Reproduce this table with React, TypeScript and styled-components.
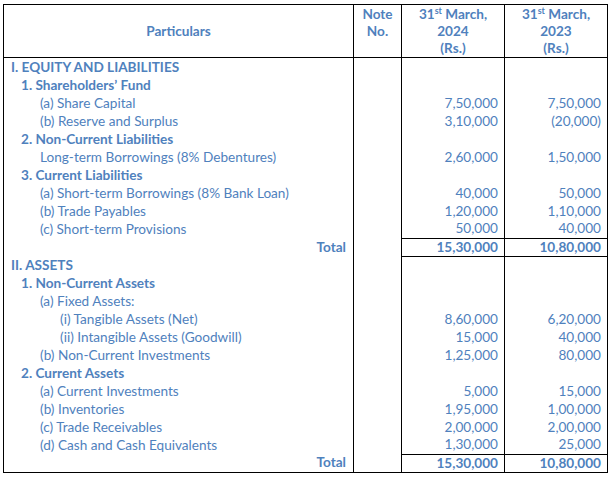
import React from "react";
import styled, { createGlobalStyle } from "styled-components";

const GlobalStyle = createGlobalStyle`
  html, body { margin: 0; padding: 0; background: #ffffff; }
  body { font-family: Lato, "Open Sans", sans-serif; }
`;

const Page = styled.div`
  padding: 4px 0 0 3px;
`;

const Table = styled.table`
  border-collapse: collapse;
  table-layout: fixed;
  width: 605px;
  border: 1px solid #000;
  color: #4f81bd;
  font-family: Lato, "Open Sans", sans-serif;
  font-size: 13.6px;
  line-height: 17px;
`;

const HeadCell = styled.th<{ $valign?: string }>`
  border: 1px solid #000;
  height: 48px;
  padding: 1px 2px 0;
  font-weight: 700;
  text-align: center;
  vertical-align: ${(p) => p.$valign || "top"};
`;

const Row = styled.tr`
  height: 18px;
`;

const LabelCell = styled.td<{ $indent: number; $bold?: boolean }>`
  padding: 0 0 0 ${(p) => p.$indent}px;
  border-left: 1px solid #000;
  border-right: 1px solid #000;
  font-weight: ${(p) => (p.$bold ? 700 : 400)};
  white-space: nowrap;
  height: 18px;
`;

const TotalLabel = styled.td`
  padding: 0 7px 0 0;
  text-align: right;
  font-weight: 700;
  border-left: 1px solid #000;
  border-right: 1px solid #000;
`;

const NoteCell = styled.td`
  border-left: 1px solid #000;
  border-right: 1px solid #000;
`;

const AmountCell = styled.td<{ $total?: boolean }>`
  padding: 0 6px 0 0;
  text-align: right;
  white-space: nowrap;
  border-left: 1px solid #000;
  border-right: 1px solid #000;
  font-weight: ${(p) => (p.$total ? 700 : 400)};
  ${(p) => (p.$total ? "border-top: 1px solid #000; border-bottom: 1px solid #000;" : "")}
`;

type Line = {
  text: string;
  level: number;
  bold?: boolean;
  a?: string;
  b?: string;
  total?: boolean;
};

const indents = [7, 17, 36, 56];

const lines: Line[] = [
  { text: "I. EQUITY AND LIABILITIES", level: 0, bold: true },
  { text: "1. Shareholders’ Fund", level: 1, bold: true },
  { text: "(a) Share Capital", level: 2, a: "7,50,000", b: "7,50,000" },
  { text: "(b) Reserve and Surplus", level: 2, a: "3,10,000", b: "(20,000)" },
  { text: "2. Non-Current Liabilities", level: 1, bold: true },
  { text: "Long-term Borrowings (8% Debentures)", level: 2, a: "2,60,000", b: "1,50,000" },
  { text: "3. Current Liabilities", level: 1, bold: true },
  { text: "(a) Short-term Borrowings (8% Bank Loan)", level: 2, a: "40,000", b: "50,000" },
  { text: "(b) Trade Payables", level: 2, a: "1,20,000", b: "1,10,000" },
  { text: "(c) Short-term Provisions", level: 2, a: "50,000", b: "40,000" },
  { text: "Total", level: 0, total: true, a: "15,30,000", b: "10,80,000" },
  { text: "II. ASSETS", level: 0, bold: true },
  { text: "1. Non-Current Assets", level: 1, bold: true },
  { text: "(a) Fixed Assets:", level: 2 },
  { text: "(i) Tangible Assets (Net)", level: 3, a: "8,60,000", b: "6,20,000" },
  { text: "(ii) Intangible Assets (Goodwill)", level: 3, a: "15,000", b: "40,000" },
  { text: "(b) Non-Current Investments", level: 2, a: "1,25,000", b: "80,000" },
  { text: "2. Current Assets", level: 1, bold: true },
  { text: "(a) Current Investments", level: 2, a: "5,000", b: "15,000" },
  { text: "(b) Inventories", level: 2, a: "1,95,000", b: "1,00,000" },
  { text: "(c) Trade Receivables", level: 2, a: "2,00,000", b: "2,00,000" },
  { text: "(d) Cash and Cash Equivalents", level: 2, a: "1,30,000", b: "25,000" },
  { text: "Total", level: 0, total: true, a: "15,30,000", b: "10,80,000" },
];

const Sup = styled.sup`
  font-size: 9px;
  line-height: 0;
  vertical-align: 5px;
`;

export default function App() {
  return (
    <>
      <GlobalStyle />
      <Page>
        <Table>
          <colgroup>
            <col style={{ width: 350 }} />
            <col style={{ width: 48 }} />
            <col style={{ width: 103 }} />
            <col style={{ width: 103 }} />
          </colgroup>
          <thead>
            <tr>
              <HeadCell $valign="middle">Particulars</HeadCell>
              <HeadCell>
                Note
                <br />
                No.
              </HeadCell>
              <HeadCell>
                31<Sup>st</Sup> March,
                <br />
                2024
                <br />
                (Rs.)
              </HeadCell>
              <HeadCell>
                31<Sup>st</Sup> March,
                <br />
                2023
                <br />
                (Rs.)
              </HeadCell>
            </tr>
          </thead>
          <tbody>
            {lines.map((l, i) => (
              <Row key={i}>
                {l.total ? (
                  <TotalLabel>{l.text}</TotalLabel>
                ) : (
                  <LabelCell $indent={indents[l.level]} $bold={l.bold}>
                    {l.text}
                  </LabelCell>
                )}
                <NoteCell />
                <AmountCell $total={l.total}>{l.a}</AmountCell>
                <AmountCell $total={l.total}>{l.b}</AmountCell>
              </Row>
            ))}
          </tbody>
        </Table>
      </Page>
    </>
  );
}
